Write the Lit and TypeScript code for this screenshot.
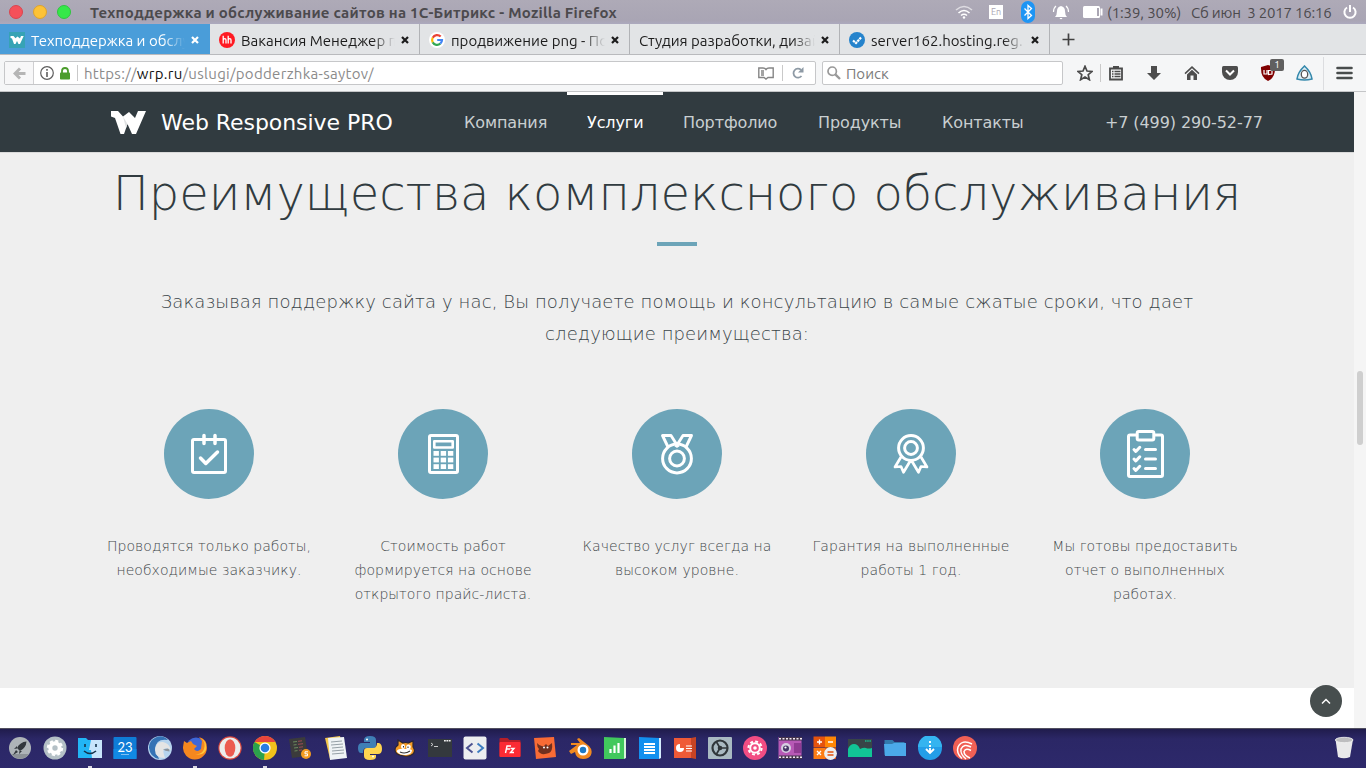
import { LitElement, html, svg, css } from "lit";
import { customElement } from "lit/decorators.js";

const closeGlyph = html`<svg class="close" width="8" height="8" viewBox="0 0 8 8"><path d="M1 1L7 7M7 1L1 7" stroke="currentColor" stroke-width="2.2"/></svg>`;

const favWrp = svg`<rect width="16" height="16" fill="#36a3b5"/><path d="M1.500 4h3l2 2.300L8.500 4.500 11 6.500l1-2.500h2.700L11 12H9.500L8 9l-1.500 3H5L3 6.500 1.500 6Z" fill="#fff"/>`;
const favHh = svg`<circle cx="8" cy="8" r="8" fill="#ff1a22"/><path d="M4.200 3.800V11.500M4.200 8.300Q4.500 6.600 5.800 6.600Q7 6.600 7 8V11.500M9.200 3.800V11.500M9.200 8.300Q9.500 6.600 10.800 6.600Q12 6.600 12 8V11.500" stroke="#fff" stroke-width="1.300" fill="none"/>`;
const favG = svg`<circle cx="8" cy="8" r="8" fill="#fff"/><g fill="none" stroke-width="2.200"><path d="M11.700 4.600A5 5 0 0 0 3.700 5.700" stroke="#ea4335"/><path d="M3.700 5.700A5 5 0 0 0 3.700 10.400" stroke="#fbbc05"/><path d="M3.700 10.400A5 5 0 0 0 11.300 11.700" stroke="#34a853"/><path d="M11.300 11.700A5 5 0 0 0 13 8H8.200" stroke="#4285f4"/></g>`;
const favReg = svg`<circle cx="8" cy="8" r="8" fill="#2583cc"/><path d="M4 8.500L7 11L12 5.500" stroke="#fff" stroke-width="2.200" stroke-dasharray="2.400 .6" fill="none"/>`;

const tabs = [
  { icon: favWrp, title: "Техподдержка и обслу", cls: "active t0" },
  { icon: favHh, title: "Вакансия Менеджер п", cls: "t1" },
  { icon: favG, title: "продвижение png - По", cls: "t2" },
  { icon: null, title: "Студия разработки, дизай", cls: "t3" },
  { icon: favReg, title: "server162.hosting.reg.", cls: "t4" },
];

const features = [
  {
    lines: ["Проводятся только работы,", "необходимые заказчику."],
    icon: svg`<rect x="28.500" y="30.500" width="33" height="33" rx="1.500"/><path d="M40 26.500v8M51 26.500v8M36.500 49l5.300 5.500L53.500 43" stroke-linecap="round" stroke-width="3.500"/>`,
  },
  {
    lines: ["Стоимость работ", "формируется на основе", "открытого прайс-листа."],
    icon: svg`<rect x="31.500" y="26.500" width="28" height="37" rx="1.500"/><rect x="36.300" y="32.200" width="18.400" height="6.300" stroke-width="2.600"/><g fill="#fff" stroke="none">${[0, 1, 2].map((r) => [0, 1, 2].map((c) => svg`<rect x=${35.5 + c * 7.2} y=${42 + r * 6.6} width="5.400" height="4.800"/>`))}</g>`,
  },
  {
    lines: ["Качество услуг всегда на", "высоком уровне."],
    icon: svg`<circle cx="45" cy="49.500" r="14.400"/><circle cx="45" cy="49.500" r="7.400"/><path d="M36 38L30.500 26.500H39L45 36L51 26.500H59.500L54 38M45 36L43.500 38M45 36L46.500 38" stroke-width="2.900"/>`,
  },
  {
    lines: ["Гарантия на выполненные", "работы 1 год."],
    icon: svg`<circle cx="45" cy="39" r="12.400"/><circle cx="45" cy="39" r="6.400"/><path d="M35 48L29 58L35 57.500L37.500 63.300L44.500 51.500M55 48L61 58L55 57.500L52.500 63.300L45.500 51.500" stroke-width="2.700"/>`,
  },
  {
    lines: ["Мы готовы предоставить", "отчет о выполненных", "работах."],
    icon: svg`<path d="M37 26H30Q28.500 26 28.500 27.500V66Q28.500 67.500 30 67.500H61Q62.500 67.500 62.500 66V27.500Q62.500 26 61 26H54"/><rect x="37.200" y="22.500" width="16.600" height="8.600" rx="1.500"/>${[40.5, 50, 59.5].map((y) => svg`<path d=${`M34 ${y}l1.800 2l4-4.200M45.500 ${y}h10`} stroke-linecap="round"/>`)}`,
  },
];

const dock = [
  svg`<circle cx="12" cy="12" r="11" fill="#aeb4b8"/><path d="M3 18a11 11 0 0 0 18 0" fill="#8c9297"/><path d="M18.500 5.500Q12 6 9 12L12 15Q18 12 18.500 5.500ZM9 10L6 13l3-.5ZM14 15l-3 3 .5-3ZM8 14l-3 5 5-3Z" fill="#33383d"/>`,
  svg`<circle cx="12" cy="12" r="11.500" fill="#b4c0c6"/><circle cx="12" cy="12" r="4.700" fill="none" stroke="#fff" stroke-width="4"/><circle cx="12" cy="12" r="7.200" fill="none" stroke="#fff" stroke-width="2" stroke-dasharray="3.200 2.450"/>`,
  svg`<path d="M0 2h8l2 2h4v18H0Z" fill="#22b5f5"/><path d="M13 4h11v18H14l-1-8h-2Z" fill="#c8e5fb"/><path d="M7 8v3M18 8v3M6 15q6 5 12 0" stroke="#15324a" stroke-width="1.600" fill="none"/>`,
  svg`<rect x=".5" y="1" width="23" height="22" rx="1" fill="#0f7cd6"/><rect x=".5" y="13" width="23" height="10" fill="#1189e4"/><text class="day" x="12" y="16" text-anchor="middle" fill="#fff">23</text><path d="M8 18.500h8" stroke="#9ccdf5" stroke-width=".8"/>`,
  svg`<circle cx="12" cy="12" r="12" fill="#b5d3ee"/><path d="M1 12A11 11 0 0 1 20 4Q8 2 7 13l4 10Q2 21 1 12Z" fill="#3572b4"/><path d="M7 14Q8 5 15 6q6 1 8 8l-5-2q-4 1-2 7l1 3q-10 0-10-8Z" fill="#e4e4e4"/><path d="M15 13.500l5-1q2 1 1.500 3l-4-.8Z" fill="#8c949c"/>`,
  svg`<circle cx="13" cy="11" r="9.500" fill="#3f67d8"/><path d="M1 5l3 2 4-2 2 3 4 2-3 3q3 4 7 0l1-8-3-4q8 2 8 11a12 12 0 0 1-24-1Z" fill="#f5871f"/><path d="M18 2q5 4 3 11-2 6-9 5 8 2 11-4Q24 5 18 2Z" fill="#ffc83a"/>`,
  svg`<circle cx="12" cy="12" r="11.700" fill="#d9483e"/><circle cx="12" cy="12" r="10.600" fill="#ececec"/><ellipse cx="12" cy="12" rx="5.300" ry="8.700" fill="#ec5a50"/>`,
  svg`<circle cx="12" cy="12" r="12" fill="#f1c21b"/><path d="M12 12L1.600 6A12 12 0 0 0 11 24Z" fill="#2ba24c"/><path d="M1.600 6A12 12 0 0 1 22.400 6H12Z" fill="#e8453c"/><circle cx="12" cy="12" r="5.600" fill="#fff"/><circle cx="12" cy="12" r="4.300" fill="#2a7de1"/>`,
  svg`<path d="M1 3l16-2 3 19-16 2Z" fill="#3b3b3b"/><path d="M5 6l4-.5M5.500 9l3-.4M6 12l4-.5M6.500 15l3-.4" stroke="#6c8a5d" stroke-width="1"/><path d="M10 5.300l4-.5M10 8.300l5-.6M11 11.300l4-.5M11 14.300l3-.4" stroke="#a04a55" stroke-width="1"/><circle cx="18" cy="18" r="5" fill="#f49b20"/><path d="M20 15.800h-3v2h2.500v2H16.500" fill="none" stroke="#fff"/>`,
  svg`<path d="M2 2l15-2 5 20-15 3Z" fill="#f3c74c"/><path d="M5 2l16-1 3 21-17 2Z" fill="#eff3f5"/><path d="M8 6l11-1M8 9l12-1M9 12l11-1M9 15l12-1M9 18l12-1" stroke="#8b969d" stroke-width=".9"/>`,
  svg`<path d="M12 0q6 0 6 4v6q0 2-3 2H8q-3 0-3 5H3q-3 0-3-5t4-5h8V6H6V4q0-4 6-4Z" fill="#3f7fb5"/><path d="M12 24q-6 0-6-4v-5q0-3 3-3h6q4 0 4-5h2q3 1 3 6t-4 5h-8v1h6v2q0 3-6 3Z" fill="#ffd550"/><circle cx="9" cy="3.500" r="1" fill="#fff"/><circle cx="15" cy="20.500" r="1" fill="#fff"/>`,
  svg`<path d="M5 4l5 3q3-1 5 0l5-2 0 6q3 4 0 7-3 3-9 2-9-1-9-6 0-3 3-5Z" fill="#f49b25" stroke="#2a2533" stroke-width="1.200"/><path d="M7 13q-4 1-3 3 3 3.500 9 3t6-5q-2-1.500-6-1Z" fill="#fff"/><ellipse cx="10" cy="10.500" rx="2" ry="2.500" fill="#fff"/><ellipse cx="15.500" cy="11" rx="2.300" ry="2.600" fill="#fff"/><path d="M7 16q5 2.500 10-1M10.500 10v1.500M15 10.500V12" stroke="#333" stroke-width="1.100" fill="none"/>`,
  svg`<rect y="3" width="24" height="18" fill="#34393d"/><path d="M3 7l2 1.500L3 10M6 10.500h4" stroke="#ddd" stroke-width=".9" fill="none"/><path d="M16 4.800h7" stroke="#eee" stroke-width="1.500" stroke-dasharray="1.800 .6"/>`,
  svg`<rect x=".5" y=".5" width="23" height="23" rx="2" fill="#eceef0"/><path d="M9.500 7.500L4 12l5.500 4.500" stroke="#4b5290" stroke-width="2" fill="none"/><path d="M14.500 7.500L20 12l-5.500 4.500" stroke="#3d7dc0" stroke-width="2" fill="none"/>`,
  svg`<path d="M1.500 3q0-1 1-1h7l2 2h10q1 0 1 1v15q0 1-1 1h-19q-1 0-1-1Z" fill="#b51f28"/><rect x="1.500" y="6" width="21" height="15" rx="1" fill="#fb2b34"/><path d="M7.500 17l1.500-7h4M8.500 13h3.500M12.500 12.500H16l-3.500 4H16" stroke="#fff" stroke-width="1.400" fill="none"/>`,
  svg`<path d="M1 2l20-1 2 20-20 2Z" fill="#f96b35"/><path d="M4 7q3 4 7 3l2-2 2 2 4-3q1 8-3 10-8 3-11-2l1-2Q4 11 4 7Z" fill="#70301f"/><circle cx="11" cy="11.500" r="1" fill="#fff"/><circle cx="14.500" cy="11.500" r="1" fill="#fff"/>`,
  svg`<path d="M1 15l8-6H3V7h9L9 3l2-1 10 8q4 4 2 9-2 4-8 4-7 0-8-7l-4 2Z" fill="#f28a20"/><circle cx="15" cy="14" r="5.500" fill="#fff"/><circle cx="15" cy="14" r="3.200" fill="#1e79c4"/>`,
  svg`<path d="M1 1l20 1v21H1Z" fill="#41c85d"/><path d="M21 2h2v20l-2 1Z" fill="#d8f4dc"/><path d="M7.500 17v-4M11.500 17V9.500M15.500 17V7" stroke="#fff" stroke-width="2.200"/>`,
  svg`<path d="M1 1l20 1v21H1Z" fill="#1390ef"/><path d="M21 2h2v20l-2 1Z" fill="#d4ecfd"/><path d="M6 8h11M6 11h11M6 14h11M6 17h11" stroke="#fff" stroke-width="1.800"/>`,
  svg`<path d="M1 2h17v20H1Z" fill="#ef5a37"/><path d="M18 2l5-1v22l-5-1Z" fill="#c74424"/><circle cx="7" cy="12" r="4" fill="#fff"/><path d="M7 12V8h4v4Z" fill="#ef5a37"/><path d="M13 10h6M13 12.500h6M13 15h6" stroke="#fff" stroke-width="1.200"/>`,
  svg`<rect x="0" y="1" width="24" height="22" rx="1" fill="#a9bac2"/><circle cx="12" cy="12" r="7.500" fill="none" stroke="#30373b" stroke-width="2.200"/><circle cx="12" cy="12" r="2.300" fill="#30373b"/><path d="M12 12H19M12 12L8.500 6M12 12L8.500 18" stroke="#30373b" stroke-width="1.700"/>`,
  svg`<circle cx="12" cy="12" r="12" fill="#f24d83"/><circle cx="12" cy="12" r="4.800" fill="none" stroke="#fff" stroke-width="2"/><circle cx="12" cy="12" r="6.600" fill="none" stroke="#fff" stroke-width="2" stroke-dasharray="2.900 2.280"/><circle cx="12" cy="12" r="1.800" fill="#fff"/>`,
  svg`<rect x=".5" y="1" width="23" height="22" fill="#b759b5"/><path d="M1 2.700h23M1 21.300h23" stroke="#44344d" stroke-width="3.400"/><path d="M1 2.700h23M1 21.300h23" stroke="#f4eaf4" stroke-width="1.600" stroke-dasharray="2 1.500"/><path d="M16 7h7v10h-7Z" fill="#903b92"/><circle cx="8" cy="12" r="5" fill="#d6cfe0"/><circle cx="8" cy="12.500" r="3" fill="#473768"/><circle cx="7.500" cy="11.500" r="1.100" fill="#fff"/>`,
  svg`<path d="M.5.5H12v11H.5Z" fill="#e5530d"/><path d="M12 .5h11v11H12Z" fill="#ff8605"/><path d="M.5 12H12v11H.5Z" fill="#fc7c14"/><path d="M12 12h11v11H12Z" fill="#e5530d"/><path d="M4 6h5M6.500 3.500v5M15 6h5M4 15l4 4M8 15l-4 4" stroke="#fff" stroke-width="1.300"/><circle cx="17.500" cy="17.500" r="6.400" fill="#eceff1"/><path d="M14.500 16h6M14.500 19h6" stroke="#e5530d" stroke-width="1.500"/>`,
  svg`<rect y="3" width="24" height="18" fill="#384447"/><path d="M0 13Q2 8 6 8t6 5q4-2 6-1t6 0v9H0Z" fill="#11c596"/><path d="M17 5h6" stroke="#18b88d" stroke-width="1.600" stroke-dasharray="1.500 .7"/>`,
  svg`<path d="M1.500 4h8l2 2h10v13h-20Z" fill="#3279ac"/><path d="M1 8h8l2-1h12v13H2Z" fill="#4ba9e9"/>`,
  svg`<circle cx="12" cy="12" r="12" fill="#249ee8"/><path d="M0 11a12 12 0 0 1 24 0Z" fill="#35b4f0"/><path d="M12 5v2M12 9v2M12 12v5M8 13l4 4 4-4" stroke="#fff" stroke-width="1.900" fill="none"/>`,
  svg`<circle cx="12" cy="12" r="12" fill="#f06055"/><g fill="none" stroke="#fff" stroke-width="1.500"><path d="M19 8Q9 3 5 11q-2 6 4 11.500M18 11q-7-4-10 2-1 5 5 10M18 14.500q-5-3-7 1 0 4 6 6.500"/></g>`,
];

@customElement("app-root")
export class AppRoot extends LitElement {
  static styles = css`
    :host { display: block; width: 1366px; height: 768px; overflow: hidden; font-family: "DejaVu Sans", sans-serif; }
    * { box-sizing: border-box; }
    svg { display: block; flex: none; }
    .screen { display: grid; grid-template-rows: 24px 31px 37px 636px 40px; width: 1366px; height: 768px; }
    .ui { font-family: Ubuntu, "Noto Sans", sans-serif; white-space: pre; }

    .titlebar { display: flex; align-items: center; background: linear-gradient(#aeaab7, #a9a5b4 85%, #aca9be); color: #4c4a4d; }
    .lights { display: flex; gap: 10px; padding-left: 9px; width: 90px; flex: none; }
    .light { width: 14px; height: 14px; border-radius: 50%; background: #f5515a; border: 1px solid #d94650; }
    .yellow { background: #fdc236; border-color: #dda32f; }
    .green { background: #35e849; border-color: #2fc540; }
    .wintitle { font-weight: 600; font-size: 15px; letter-spacing: 0.24px; width: 865px; flex: none; }
    .tray { display: flex; align-items: center; }
    .wifi { margin-right: 16px; }
    .lang { width: 14px; height: 14px; background: #fff; color: #aaa6b3; font-size: 9px; line-height: 14px; text-align: center; margin-right: 18px; }
    .bt { margin-right: 17px; }
    .bell { margin-right: 13px; }
    .bat { margin-right: 4px; }
    .charge { width: 84px; font-size: 15px; letter-spacing: -0.1px; }
    .clock { width: 152px; font-size: 15px; letter-spacing: -0.2px; }

    .tabs { display: flex; background: #e2e4e6; border-bottom: 1px solid #b9babd; color: #1c1c1c; }
    .tab { width: 210px; height: 30px; display: flex; align-items: center; padding: 2px 10px 0 9px; border-right: 1px solid #b1b3b6; font-size: 15px; }
    .tab.active { background: #4a9dd9; color: #fff; border-right-color: #4a9dd9; }
    .fav { margin-right: 6px; }
    .label { width: 154px; overflow: hidden; flex: none; -webkit-mask-image: linear-gradient(90deg, #000 calc(100% - 22px), transparent); mask-image: linear-gradient(90deg, #000 calc(100% - 22px), transparent); }
    .t3 .label { width: 176px; }
    .close { margin-left: auto; }
    .plus { margin: 9px 0 0 12px; }

    .toolbar { display: flex; align-items: center; background: #f5f6f7; border-bottom: 1px solid #c4c5c7; padding: 0 13px 0 4px; }
    .urlbar { display: flex; align-items: center; width: 812px; height: 24px; border: 1px solid #c6c7c9; border-radius: 2px; background: #fff; font-size: 15px; color: #8b8b8b; }
    .back { display: flex; align-items: center; width: 29px; height: 22px; padding-left: 8px; background: #f7f7f8; border-right: 1px solid #cfcfd1; }
    .info { margin-left: 6px; }
    .lock { margin-left: 6px; }
    .sep { width: 1px; height: 16px; background: #c9c9c9; flex: none; }
    .s1 { margin: 0 6px 0 7px; }
    .url { width: 674px; letter-spacing: 0.3px; }
    .url b { font-weight: 400; color: #111; }
    .s2 { margin: 0 9px 0 8px; }
    .search { display: flex; align-items: center; width: 241px; height: 24px; border: 1px solid #c6c7c9; border-radius: 2px; background: #fff; margin-left: 6px; padding-left: 4px; font-size: 15px; color: #7c7c7c; gap: 5px; }
    .tools { display: flex; align-items: center; flex: 1; }
    .star { margin-left: 14px; }
    .s3 { margin: 0 7px; height: 18px; }
    .tool { margin-right: 22px; }
    .shield { position: relative; margin-right: 20px; }
    .count { position: absolute; left: 10px; top: -6px; width: 14px; height: 12px; border-radius: 2px; background: #606060; color: #fff; font-size: 10px; line-height: 12px; text-align: center; }
    .s4 { height: 33px; margin: 0 12px 0 10px; background: #dcdde0; }

    .viewport { display: grid; grid-template-columns: 1354px 12px; position: relative; background: #fff; }
    .header { display: flex; height: 61px; background: #313b40; border-bottom: 1px solid #dadada; padding-left: 111px; align-items: center; color: #c9cfd1; font-size: 16px; letter-spacing: -0.1px; white-space: nowrap; }
    .logo { margin: 0 15px 0 0; }
    .brand { width: 283px; font-size: 22px; letter-spacing: -0.05px; color: #fff; }
    .nav { display: flex; height: 60px; width: 661px; }
    .link { height: 60px; line-height: 55px; padding: 0 20px; border-top: 3px solid transparent; }
    .link.on { color: #fff; border-top-color: #fff; }
    .n0 { width: 123px; } .n1 { width: 96px; } .n2 { width: 135px; } .n3 { width: 124px; } .n4 { width: 122px; }
    .body { height: 535px; background: #efefef; color: #3b4549; text-align: center; font-weight: 200; white-space: nowrap; }
    .h { margin: 0; font-size: 48px; font-weight: 200; line-height: 56px; padding-top: 12px; letter-spacing: -0.05px; color: #313b40; }
    .rule { width: 40px; height: 4px; background: #6ca4b8; margin: 21px auto 0; }
    .lead { margin: 40px 0 0; font-size: 18px; line-height: 32px; letter-spacing: 0.12px; }
    .features { display: grid; grid-template-columns: repeat(5, 234px); padding-left: 92px; margin-top: 59px; }
    .disc { width: 90px; height: 90px; border-radius: 50%; background: #6ca4b8; margin: 0 auto 35px; }
    .disc svg { fill: none; stroke: #fff; stroke-width: 3; stroke-linejoin: round; }
    .cap { font-size: 14px; line-height: 24px; letter-spacing: 0.05px; color: #43484b; }
    .track { background: #f5f5f5; padding: 279px 3px 0; }
    .thumb { width: 6px; height: 74px; border-radius: 3px; background: #cfcfcf; }
    .up { position: absolute; left: 1310px; top: 593px; width: 32px; height: 32px; border-radius: 50%; background: #474e4e; }

    .dock { display: flex; background: linear-gradient(#201c4c, #2b2766 10px, #2d296b); border-top: 1px solid #514f5f; padding: 0 8px 0 2px; }
    .slot { width: 35px; height: 39px; padding: 7px 0 0 6px; position: relative; }
    .slot:last-child { margin: 0 2px 0 auto; width: 24px; padding-left: 0; }
    .dot { position: absolute; left: 16px; bottom: 0; width: 4px; height: 2px; background: #d8d6e2; }
    .day { font-family: Lato, sans-serif; font-size: 13px; }
  `;

  render() {
    return html`<div class="screen">
      <div class="titlebar ui">
        <div class="lights"><span class="light"></span><span class="light yellow"></span><span class="light green"></span></div>
        <div class="wintitle">Техподдержка и обслуживание сайтов на 1С-Битрикс - Mozilla Firefox</div>
        <div class="tray">
          <svg class="wifi" width="18" height="14" viewBox="0 0 18 14"><g fill="none" stroke="#fff" stroke-width="1.600"><path d="M1 5Q9-2 17 5" opacity=".6"/><path d="M3.500 8Q9 3 14.500 8M6 10.500Q9 8 12 10.500"/></g><circle cx="9" cy="12.500" r="1.200" fill="#fff"/></svg>
          <span class="lang">En</span>
          <svg class="bt" width="14" height="22" viewBox="0 0 14 22"><rect width="14" height="22" rx="7" fill="#1e95f4"/><path d="M3.500 7.500l7 7L7 17.500v-13l3.500 3-7 7" fill="none" stroke="#fff" stroke-width="1.300"/></svg>
          <svg class="bell" width="18" height="16" viewBox="0 0 18 16"><path d="M3 13Q5 11 5 7q0-4 4-5 4 1 4 5 0 4 2 6ZM7.500 14h3q-1.500 2.500-3 0Z" fill="#fff"/><path d="M4 2Q1.500 4 1.500 8M14 2q2.500 2 2.500 6" stroke="#fff" fill="none" stroke-width="1.200"/></svg>
          <svg class="bat" width="20" height="12" viewBox="0 0 20 12"><rect width="17" height="12" rx="1.500" fill="#fff"/><path d="M17.500 2.500h2v7h-2Z" fill="#fff"/><rect x="14" y="2" width="2" height="8" fill="#aaa6b3"/></svg>
          <span class="charge">(1:39, 30%)</span><span class="clock">Сб июн  3 2017 16:16</span>
          <svg width="14" height="14" viewBox="0 0 14 14"><path d="M4 2.500a5.600 5.600 0 1 0 6 0M7 0v7" fill="none" stroke="#fff" stroke-width="2"/></svg>
        </div>
      </div>

      <div class="tabs ui">
        ${tabs.map((t) => html`<div class="tab ${t.cls}">${t.icon ? html`<svg class="fav" width="16" height="16" viewBox="0 0 16 16">${t.icon}</svg>` : null}<span class="label">${t.title}</span>${closeGlyph}</div>`)}
        <svg class="plus" width="13" height="13" viewBox="0 0 13 13"><path d="M6.500 0.500v12M.5 6.500h12" stroke="#414141" stroke-width="1.700"/></svg>
      </div>

      <div class="toolbar ui">
        <div class="urlbar">
          <div class="back"><svg width="13" height="13" viewBox="0 0 13 13"><path d="M12.500 6.500H3M7 1.500L2 6.500l5 5" stroke="#b5b5b5" stroke-width="3" fill="none"/></svg></div>
          <svg class="info" width="14" height="14" viewBox="0 0 14 14"><circle cx="7" cy="7" r="6.300" fill="none" stroke="#5e5e5e" stroke-width="1.200"/><path d="M7 3v1.800M7 6v5" stroke="#5e5e5e" stroke-width="1.600"/></svg>
          <svg class="lock" width="10" height="13" viewBox="0 0 10 13"><path d="M2 7V4q0-3 3-3t3 3v3" fill="none" stroke="#4b9d2c" stroke-width="1.800"/><rect y="5.500" width="10" height="7" rx=".8" fill="#4b9d2c"/></svg>
          <span class="sep s1"></span>
          <span class="url">https://<b>wrp.ru</b>/uslugi/podderzhka-saytov/</span>
          <svg width="16" height="13" viewBox="0 0 16 13"><path d="M8 2.500Q7 1 5 1H.8v9.500H6L8 12l2-1.500h5.200V1H11Q9 1 8 2.500ZM3 4h3M3 6h3M3 8h3" fill="none" stroke="#858585" stroke-width="1.400"/></svg>
          <span class="sep s2"></span>
          <svg width="12" height="12" viewBox="0 0 12 12"><path d="M9.500 9A4.500 4.500 0 1 1 9 2.800" fill="none" stroke="#8e9aa5" stroke-width="1.800"/><path d="M11.500 0v5.500H6Z" fill="#8e9aa5"/></svg>
        </div>
        <div class="search"><svg width="14" height="14" viewBox="0 0 14 14"><circle cx="5.200" cy="5.200" r="4.200" fill="none" stroke="#999" stroke-width="1.700"/><path d="M8.300 8.300L13 13" stroke="#999" stroke-width="2.400"/></svg>Поиск</div>
        <div class="tools">
          <svg class="star" width="16" height="16" viewBox="0 0 16 16"><path d="M8 1.300l2 4.700 5 .4-3.800 3.300 1.200 5L8 12l-4.400 2.700 1.200-5L1 6.400 6 6Z" fill="none" stroke="#4a4a4a" stroke-width="1.700"/></svg>
          <span class="sep s3"></span>
          <svg class="tool" width="16" height="16" viewBox="0 0 16 16"><path d="M2 3.500h12v11H2Z" fill="none" stroke="#4b4b4b" stroke-width="1.800"/><path d="M5 3V1h6v2Z" fill="#4b4b4b"/><path d="M4 6.500h1.500M6.500 6.500h6M4 9h1.500M6.500 9h6M4 11.500h1.500M6.500 11.500h6" stroke="#4b4b4b" stroke-width="1.300"/></svg>
          <svg class="tool" width="16" height="16" viewBox="0 0 16 16"><path d="M5 1h6v7h4l-7 7-7-7h4Z" fill="#4d4d4d"/></svg>
          <svg class="tool" width="16" height="16" viewBox="0 0 16 16"><path d="M8 1L0.500 8l1 1.200L8 3.200l6.500 6 1-1.200Z" fill="#4d4d4d"/><path d="M8 4.800l5 4.600v5.600H9.500v-4.500h-3V15H3V9.400Z" fill="#4d4d4d"/></svg>
          <svg class="tool" width="16" height="14" viewBox="0 0 16 14"><path d="M1.500 0h13Q16 0 16 1.500V6a8 8 0 0 1-16 0V1.500Q0 0 1.500 0Z" fill="#4d4d4d"/><path d="M4 4.500l4 4 4-4" fill="none" stroke="#fff" stroke-width="2"/></svg>
          <div class="shield"><svg width="16" height="16" viewBox="0 0 16 16"><path d="M8 0l7 2q.5 11-7 14Q.500 13 1 2Z" fill="#800000"/><path d="M4 5v4h3V5M8.500 9.500V5.500h3.500v3.500Z" stroke="#fff" fill="none" stroke-width="1.200"/></svg><span class="count">1</span></div>
          <svg width="17" height="16" viewBox="0 0 17 16"><path d="M8.500 1Q15 7 16 14q-7.500 2-15 0Q2 7 8.500 1Z" fill="#dceef5" stroke="#3488ac" stroke-width="1.600"/><ellipse cx="8.500" cy="9.300" rx="3.200" ry="3.900" fill="#fff" stroke="#555" stroke-width="1.300"/></svg>
          <span class="sep s4"></span>
          <svg width="17" height="14" viewBox="0 0 17 14"><path d="M1.500 2h14M1.500 7h14M1.500 12h14" stroke="#484c4c" stroke-width="2.600" stroke-linecap="round"/></svg>
        </div>
      </div>

      <div class="viewport">
        <div class="page">
          <div class="header">
            <svg class="logo" width="35" height="23" viewBox="0 0 35 23"><path d="M0 0H7L12 5.500 18 1l6 6 3-7h8L25 23h-4L16.500 13 13 23H9.500L4 7 0 5.500Z" fill="#fff"/><path d="M12 5.500l4.500 7.500-1.500 4Z" fill="#dfe1e2"/></svg>
            <div class="brand">Web Responsive PRO</div>
            <div class="nav">${["Компания", "Услуги", "Портфолио", "Продукты", "Контакты"].map((n, i) => html`<div class="link n${i} ${i === 1 ? "on" : ""}">${n}</div>`)}</div>
            <div class="phone">+7 (499) 290-52-77</div>
          </div>
          <div class="body">
            <h1 class="h">Преимущества комплексного обслуживания</h1>
            <div class="rule"></div>
            <p class="lead">Заказывая поддержку сайта у нас, Вы получаете помощь и консультацию в самые сжатые сроки, что дает<br>следующие преимущества:</p>
            <div class="features">
              ${features.map((f) => html`<div class="feature"><div class="disc"><svg width="90" height="90" viewBox="0 0 90 90">${f.icon}</svg></div>${f.lines.map((l) => html`<div class="cap">${l}</div>`)}</div>`)}
            </div>
          </div>
        </div>
        <div class="track"><div class="thumb"></div></div>
        <div class="up"><svg width="32" height="32" viewBox="0 0 32 32"><path d="M12 18.500l4-4 4 4" fill="none" stroke="#fff" stroke-width="1.500"/></svg></div>
      </div>

      <div class="dock">
        ${dock.map((d, i) => html`<div class="slot"><svg width="24" height="24" viewBox="0 0 24 24">${d}</svg>${[2, 5, 7].includes(i) ? html`<span class="dot"></span>` : null}</div>`)}
        <div class="slot"><svg width="24" height="24" viewBox="0 0 24 24"><path d="M3.500 3.500l2.500 17.500q6 2.500 12 0L21 3.500Z" fill="#e9e9ea"/><ellipse cx="12.200" cy="4" rx="8.800" ry="2.700" fill="#bdbdbf" stroke="#f4f4f4" stroke-width=".8"/></svg></div>
      </div>
    </div>`;
  }
}
